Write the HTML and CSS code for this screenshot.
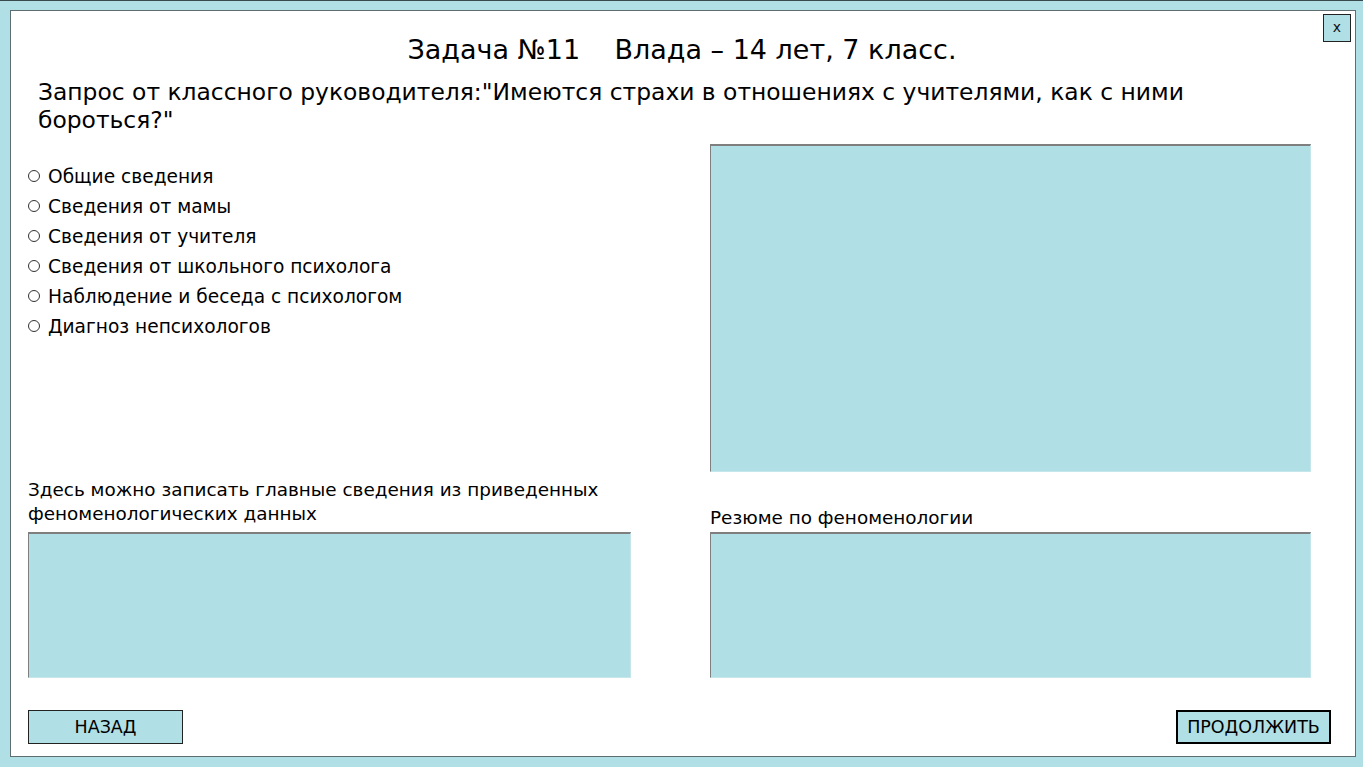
FILE: index.html
```html
<!DOCTYPE html>
<html lang="ru">
<head>
<meta charset="utf-8">
<title>Задача №11</title>
<link rel="stylesheet" href="styles.css">
</head>
<body>
<div class="panel">
  <button class="close" type="button">x</button>
  <h1 class="title">Задача №11&nbsp;&nbsp;&nbsp; Влада – 14 лет, 7 класс.</h1>
  <p class="query">Запрос от классного руководителя:"Имеются страхи в отношениях с учителями, как с ними бороться?"</p>
  <div class="grid">
    <ul class="options">
      <li><label><input type="radio" name="src" class="radio"><span>Общие сведения</span></label></li>
      <li><label><input type="radio" name="src" class="radio"><span>Сведения от мамы</span></label></li>
      <li><label><input type="radio" name="src" class="radio"><span>Сведения от учителя</span></label></li>
      <li><label><input type="radio" name="src" class="radio"><span>Сведения от школьного психолога</span></label></li>
      <li><label><input type="radio" name="src" class="radio"><span>Наблюдение и беседа с психологом</span></label></li>
      <li><label><input type="radio" name="src" class="radio"><span>Диагноз непсихологов</span></label></li>
    </ul>
    <div class="box big"></div>
    <div class="label label-left">Здесь можно записать главные сведения из приведенных феноменологических данных</div>
    <div class="label label-right">Резюме по феноменологии</div>
    <textarea class="box small"></textarea>
    <textarea class="box small"></textarea>
  </div>
  <div class="buttons">
    <button class="btn back" type="button">НАЗАД</button>
    <button class="btn next" type="button">ПРОДОЛЖИТЬ</button>
  </div>
</div>
</body>
</html>
```

FILE: styles.css
```css
html, body {
  margin: 0;
  padding: 0;
  background: #b0dfe5;
}
body {
  font-family: "DejaVu Sans", "Verdana", sans-serif;
  color: #000;
  height: 767px;
  overflow: hidden;
  border-top: 1px solid #3a4a4c;
  box-sizing: border-box;
}
.panel {
  position: relative;
  box-sizing: border-box;
  width: 1346px;
  height: 747px;
  margin: 9px 0 0 10px;
  background: #fff;
  border: 1px solid #5e6e70;
  padding: 0 24px 12px 17px;
  display: flex;
  flex-direction: column;
}
.close {
  position: absolute;
  top: 3px;
  right: 4px;
  width: 28px;
  height: 28px;
  padding: 0 0 3px;
  background: #b0dfe5;
  border: 1px solid #222;
  font-family: "DejaVu Sans", sans-serif;
  font-size: 14px;
  color: #111;
}
.title {
  margin: 24px 0 0;
  font-weight: normal;
  font-size: 27px;
  line-height: 30px;
  text-align: center;
  padding-left: 5px;
}
.query {
  margin: 13px 0 0;
  padding-left: 10px;
  font-size: 23.4px;
  line-height: 28px;
  width: 1180px;
}
.grid {
  margin-top: 10px;
  display: grid;
  grid-template-columns: 603px 601px;
  column-gap: 79px;
  grid-template-rows: 328px 60px 146px;
}
.options {
  list-style: none;
  margin: 0;
  padding: 18px 0 0;
  font-size: 18.6px;
  line-height: 30px;
}
.options label {
  display: flex;
  align-items: center;
  gap: 8px;
}
.radio {
  appearance: none;
  -webkit-appearance: none;
  margin: -2px 0 0;
  width: 12px;
  height: 12px;
  border: 1px solid #333;
  border-radius: 50%;
  background: #fff;
  box-sizing: border-box;
  flex: none;
}
.box {
  box-sizing: border-box;
  background: #b0dfe5;
  border: 1px solid;
  border-color: #7f7f7f #c5e6ea #c5e6ea #7f7f7f;
  border-top-width: 2px;
  margin: 0;
  padding: 0;
  resize: none;
  width: 100%;
  height: 100%;
  display: block;
}
.label {
  font-size: 18.4px;
  line-height: 24px;
  align-self: end;
}
.label-left {
  margin-bottom: 6px;
}
.label-right {
  margin-bottom: 2px;
}
.buttons {
  margin-top: auto;
  display: flex;
  justify-content: space-between;
}
.btn {
  box-sizing: border-box;
  width: 155px;
  height: 34px;
  background: #b0dfe5;
  font-family: "DejaVu Sans", sans-serif;
  font-size: 17.5px;
  color: #000;
  padding: 0;
}
.back {
  border: 1px solid #222;
}
.next {
  border: 2px solid #000;
}
```
